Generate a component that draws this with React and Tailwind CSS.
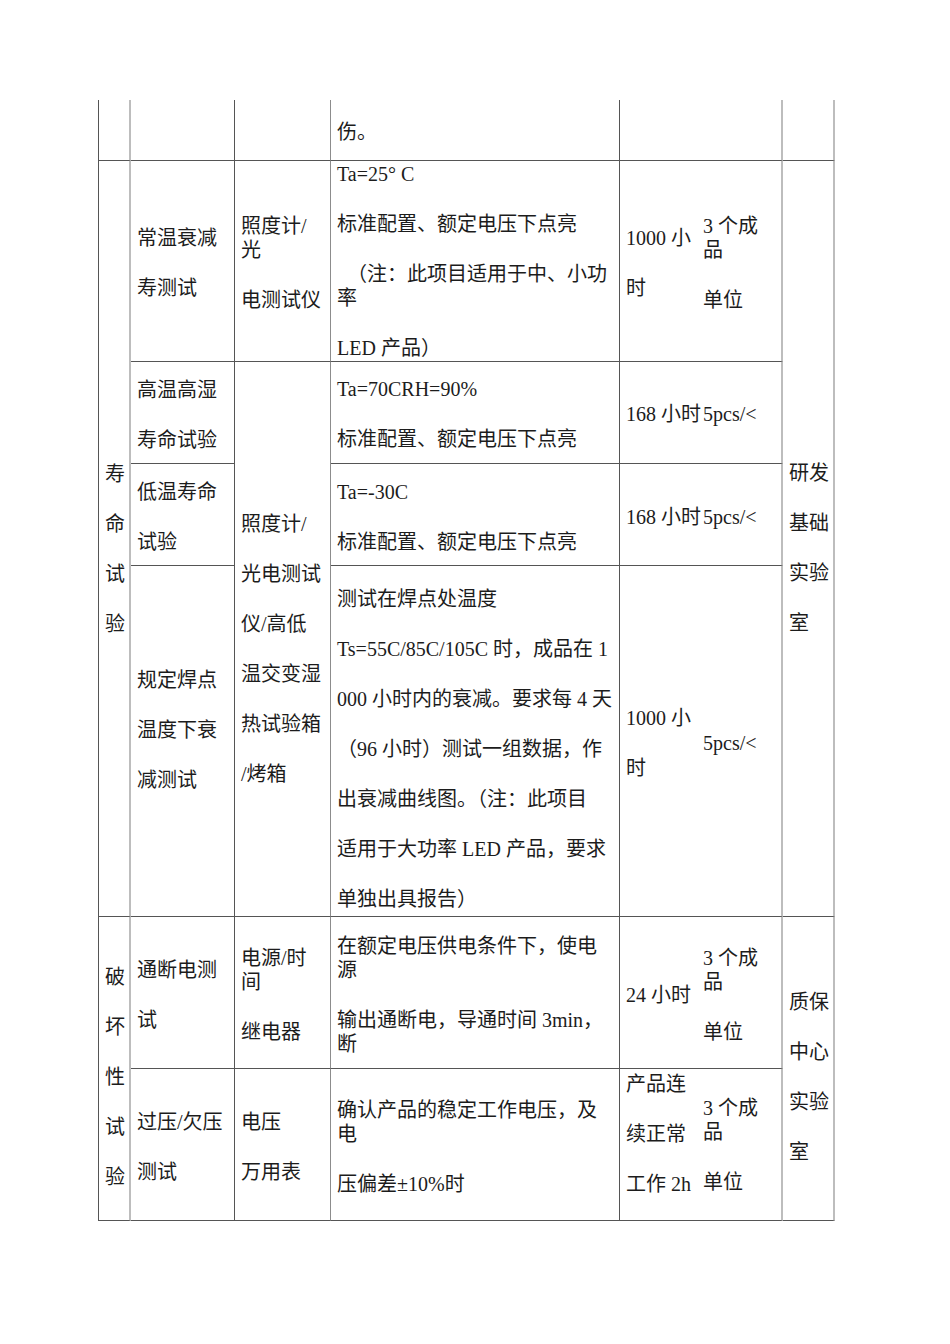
import React from "react";

// right border of each column, matching the scanned table lines
const colClass = {
  1: "col-start-1 border-r-2 border-r-[#bdbdbd]",
  2: "col-start-2 border-r border-r-[#555]",
  3: "col-start-3 border-r border-r-[#8c8c8c]",
  4: "col-start-4 border-r border-r-[#555]",
  5: "col-start-5 border-r-2 border-r-[#bdbdbd]",
  6: "col-start-6 border-r-2 border-r-[#bdbdbd]",
};

const rowClass = {
  1: "row-start-1",
  2: "row-start-2",
  3: "row-start-3",
  4: "row-start-4",
  5: "row-start-5",
  6: "row-start-6",
  7: "row-start-7",
};

const spanClass = {
  1: "row-span-1",
  2: "row-span-2",
  3: "row-span-3",
  4: "row-span-4",
};

const Paras = ({ paras }) => (
  <div className="flex flex-col gap-[26px]">
    {paras.map((lines, i) => (
      <div key={i} className="leading-[24px]">
        {lines.map((line, j) => (
          <div key={j} className="whitespace-pre">
            {line}
          </div>
        ))}
      </div>
    ))}
  </div>
);

const Cell = ({ col, row, span = 1, paras, left, right, shift = "pt-[4px]", leftClass = "" }) => (
  <div
    className={`${colClass[col]} ${rowClass[row]} ${spanClass[span]} ${shift} border-b border-b-[#555] flex flex-col justify-center pl-[6px]`}
  >
    {left ? (
      <div className="flex flex-1 items-center">
        <div className={`w-[77px] shrink-0 ${leftClass}`}>
          <Paras paras={left} />
        </div>
        <div>
          <Paras paras={right} />
        </div>
      </div>
    ) : paras ? (
      <Paras paras={paras} />
    ) : null}
  </div>
);

const stdLine = "标准配置、额定电压下点亮";

export default function App() {
  return (
    <div className="w-[950px] min-h-[1344px] bg-white pt-[100px] pl-[98px]">
      <div
        className="grid w-max grid-cols-[32px_104px_96px_289px_163px_52px] grid-rows-[61px_201px_102px_102px_351px_152px_152px] border-l border-l-[#555] text-[20px] text-[#1c1c1c]"
        style={{ fontFamily: '"Liberation Serif", "Noto Sans CJK SC", serif' }}
      >
        {/* row 1 — tail of the previous page */}
        <Cell col={1} row={1} />
        <Cell col={2} row={1} />
        <Cell col={3} row={1} />
        <Cell col={4} row={1} paras={[["伤。"]]} />
        <Cell col={5} row={1} />
        <Cell col={6} row={1} />

        {/* 寿命试验 */}
        <Cell col={1} row={2} span={4} shift="pt-[20px]" paras={[["寿"], ["命"], ["试"], ["验"]]} />
        <Cell col={2} row={2} paras={[["常温衰减"], ["寿测试"]]} />
        <Cell col={3} row={2} paras={[["照度计/", "光"], ["电测试仪"]]} />
        <Cell
          col={4}
          row={2}
          shift="pt-0"
          paras={[
            ["Ta=25° C"],
            [stdLine],
            ["  （注：此项目适用于中、小功", "率"],
            ["LED 产品）"],
          ]}
        />
        <Cell
          col={5}
          row={2}
          left={[["1000 小"], ["时"]]}
          right={[["3 个成", "品"], ["单位"]]}
        />
        <Cell col={6} row={2} span={4} shift="pt-[18px]" paras={[["研发"], ["基础"], ["实验"], ["室"]]} />

        <Cell col={2} row={3} paras={[["高温高湿"], ["寿命试验"]]} />
        <Cell
          col={3}
          row={3}
          span={3}
          shift="pt-[20px]"
          paras={[["照度计/"], ["光电测试"], ["仪/高低"], ["温交变湿"], ["热试验箱"], ["/烤箱"]]}
        />
        <Cell col={4} row={3} shift="pt-[2px]" paras={[["Ta=70CRH=90%"], [stdLine]]} />
        <Cell col={5} row={3} shift="pt-[2px]" left={[["168 小时"]]} right={[["5pcs/<"]]} />

        <Cell col={2} row={4} paras={[["低温寿命"], ["试验"]]} />
        <Cell col={4} row={4} paras={[["Ta=-30C"], [stdLine]]} />
        <Cell col={5} row={4} left={[["168 小时"]]} right={[["5pcs/<"]]} />

        <Cell col={2} row={5} shift="pb-[22px]" paras={[["规定焊点"], ["温度下衰"], ["减测试"]]} />
        <Cell
          col={4}
          row={5}
          shift="pt-[16px]"
          paras={[
            ["测试在焊点处温度"],
            ["Ts=55C/85C/105C 时，成品在 1"],
            ["000 小时内的衰减。要求每 4 天"],
            ["（96 小时）测试一组数据，作"],
            ["出衰减曲线图。（注：此项目"],
            ["适用于大功率 LED 产品，要求"],
            ["单独出具报告）"],
          ]}
        />
        <Cell col={5} row={5} shift="pt-[3px]" left={[["1000 小"], ["时"]]} right={[["5pcs/<"]]} />

        {/* 破坏性试验 */}
        <Cell col={1} row={6} span={2} shift="pt-[16px]" paras={[["破"], ["坏"], ["性"], ["试"], ["验"]]} />
        <Cell col={2} row={6} paras={[["通断电测"], ["试"]]} />
        <Cell col={3} row={6} paras={[["电源/时", "间"], ["继电器"]]} />
        <Cell
          col={4}
          row={6}
          shift="pt-[5px]"
          paras={[
            ["在额定电压供电条件下，使电", "源"],
            ["输出通断电，导通时间 3min，", "断"],
          ]}
        />
        <Cell
          col={5}
          row={6}
          left={[["24 小时"]]}
          right={[["3 个成", "品"], ["单位"]]}
        />
        <Cell col={6} row={6} span={2} shift="pt-[16px]" paras={[["质保"], ["中心"], ["实验"], ["室"]]} />

        <Cell col={2} row={7} paras={[["过压/欠压"], ["测试"]]} />
        <Cell col={3} row={7} paras={[["电压"], ["万用表"]]} />
        <Cell
          col={4}
          row={7}
          paras={[["确认产品的稳定工作电压，及", "电"], ["压偏差±10%时"]]}
        />
        <Cell
          col={5}
          row={7}
          shift="pt-0"
          leftClass="self-start mt-[3px]"
          left={[["产品连"], ["续正常"], ["工作 2h"]]}
          right={[["3 个成", "品"], ["单位"]]}
        />
      </div>
    </div>
  );
}
